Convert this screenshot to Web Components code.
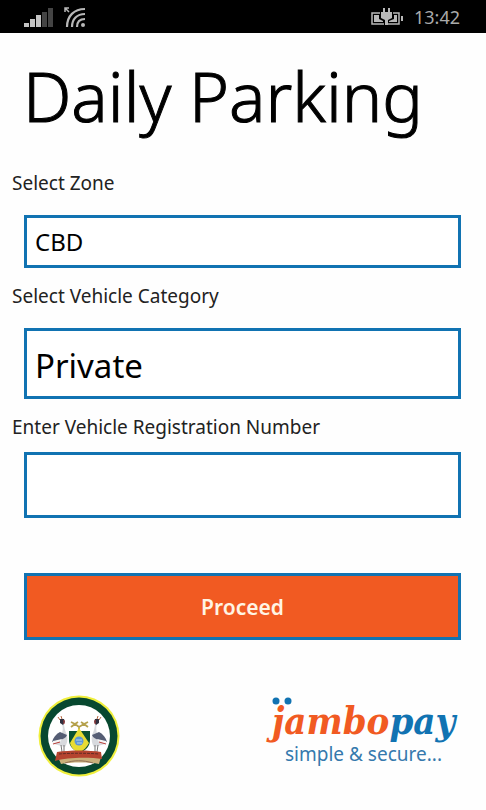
<!DOCTYPE html>
<html lang="en">
<head>
<meta charset="utf-8">
<meta name="viewport" content="width=device-width, initial-scale=1">
<title>Daily Parking</title>
<style>
    body {
        margin: 0;
        background: #fefefe;
        color: #000;
        font-family: "Noto Sans", "Open Sans", sans-serif;
        --blue: #1173b2;
        --orange: #f15a22;
    }
</style>
</head>
<body>
<parking-page>
    <status-bar slot="status" time="13:42"></status-bar>
    <form-field label="Select Zone" kind="select" value="CBD"></form-field>
    <form-field class="large" label="Select Vehicle Category" kind="select" value="Private"></form-field>
    <form-field class="entry" label="Enter Vehicle Registration Number" kind="text"></form-field>
    <action-button>Proceed</action-button>
    <county-crest slot="brand"></county-crest>
    <jambo-logo slot="brand"></jambo-logo>
</parking-page>

<script>
(function(){
    //small helper: every component clones its template in an open shadow root
    const define = (name, html, setup) => {
        const template = document.createElement('template');
        template.innerHTML = html;
        customElements.define(name, class extends HTMLElement {
            constructor()
            {
                super();
                this.attachShadow({mode:'open'});
                this.shadowRoot.appendChild(template.content.cloneNode(true));
            }

            connectedCallback(){
                if (setup) setup(this, this.shadowRoot);
            }
        });
    };

    //phone status bar: signal, wifi, battery and clock
    define('status-bar', `
    <style>
        :host {
            display: flex;
            align-items: center;
            justify-content: space-between;
            height: 33px;
            padding: 0 26px 0 24px;
            background: #000;
            color: #aaa;
            font-size: 18px;
            line-height: 32px;
        }
        div { display: flex; align-items: center; gap: 10px; }
        svg { display: block; }
        time { padding-top: 1px; }
    </style>
    <div>
        <svg width="30" height="22" viewBox="0 0 30 22" role="img" aria-label="Signal">
            <path fill="#c4c4c4" d="M0 17h5v4H0zM6 13h5v8H6zM12 9h5v12h-5z"/>
            <path fill="#444" d="M18 6h5v15h-5zM24 2h5v19h-5z"/>
        </svg>
        <svg width="22" height="22" viewBox="0 0 22 22" role="img" aria-label="Wi-Fi">
            <g fill="none" stroke="#b8b8b8" stroke-width="2.2">
                <path d="M3 21C3 10 10 3 21 3M8 21C8 13 13 8 21 8M13 21C13 16 16 13 21 13"/>
                <path stroke-width="1.5" d="M1 6V2h4M1 2l4 4"/>
            </g>
            <circle cx="19" cy="19" r="2" fill="#b8b8b8"/>
        </svg>
    </div>
    <div>
        <svg width="33" height="18" viewBox="0 0 33 18" role="img" aria-label="Battery charging">
            <path fill="none" stroke="#b8b8b8" stroke-width="1.5" d="M9 5H1v11h12M22 5h6v11H17"/>
            <path fill="#b8b8b8" d="M3 7h5v4l4 2v1H3zM23 7h3v7h-8v-1l5-2zM30 8h2v5h-2zM10 4h2V0h2v4h3V0h2v4h2v6l-4 2v5h-3v-5l-4-2z"/>
        </svg>
        <time></time>
    </div>`, (el, root) => {
        root.querySelector('time').textContent = el.getAttribute('time');
    });

    //label + control, the control is a drop-down or a text box
    define('form-field', `
    <style>
        :host {
            display: block;
            --height: 53px;
            --size: 24px;
            --gap: 18px;
        }
        :host(.large) { --height: 71px; --size: 33px; }
        :host(.entry) { --height: 66px; --gap: 11px; }
        label {
            display: block;
            margin-bottom: var(--gap);
            font-size: 19px;
            line-height: 28px;
            color: #222;
        }
        select, input {
            display: block;
            box-sizing: border-box;
            width: calc(100% - 12px);
            height: var(--height);
            margin: 0 0 0 12px;
            padding: 0 8px;
            border: 3px solid var(--blue);
            border-radius: 0;
            background: #fff;
            color: #000;
            font: var(--size) "Noto Sans", "Open Sans", sans-serif;
            appearance: none;
        }
        :host(.large) select { padding-top: 4px; }
    </style>
    <label for="control"></label>`, (el, root) => {
        root.querySelector('label').textContent = el.getAttribute('label');
        const isSelect = el.getAttribute('kind') === 'select';
        const control = document.createElement(isSelect ? 'select' : 'input');
        control.id = 'control';
        if (isSelect) control.add(new Option(el.getAttribute('value')));
        root.appendChild(control);
    });

    define('action-button', `
    <style>
        :host { display: block; margin: 41px 0 0 12px; }
        button {
            display: block;
            width: 100%;
            height: 67px;
            padding: 0;
            border: 3px solid var(--blue);
            background: var(--orange);
            color: #fff4e4;
            font: 600 21px "Noto Sans", "Open Sans", sans-serif;
        }
    </style>
    <button type="button"><slot></slot></button>`);

    //round crest with two cranes around a shield
    define('county-crest', `
    <style>
        :host { display: block; }
        svg { display: block; }
    </style>
    <svg width="82" height="82" viewBox="0 0 82 82" role="img" aria-label="County crest">
        <circle cx="41" cy="41" r="40.5" fill="#f0ef3c"/>
        <circle cx="41" cy="41" r="38.5" fill="#07482f"/>
        <circle cx="41" cy="41" r="31" fill="#fff"/>
        <path fill="none" stroke="#b5a14c" stroke-width="1.8" d="M33 27l4 2 3-2M33 32l4-3M50 27l-4 2-3-2M50 32l-4-3M37 29l4 3 5-3M41 31v4"/>
        <path fill="#0a5132" d="M31 36h21v9c0 6-4 10-10 13-7-3-11-7-11-13z"/>
        <path fill="#e8dc33" d="M41 33l10 15c-2 4-5 7-10 10-5-2-8-6-9-10z"/>
        <circle cx="41" cy="46" r="4.5" fill="#5c96d8"/>
        <path fill="none" stroke="#b6d8e2" d="M38 45h6M39 48h5"/>
        <g id="crane">
            <path fill="#d8dade" d="M24 29l2-1c0 4 1 8 3 12 1 5 0 9-2 12l-11-3c2-6 5-9 8-11 1-3 1-6 0-9z"/>
            <path fill="#555d74" d="M22 37c-4 2-7 6-8 10l8-2c3-1 6-2 7-5z"/>
            <path fill="#f5f5f5" d="M15 46l9-2-2 3-8 2z"/>
            <path fill="#30303f" d="M22 24h4l1 3-2 3-3-2z"/>
            <path fill="none" stroke="#b83f3a" d="M15 49l7-2M26 25v4"/>
            <path fill="none" stroke="#b5663f" d="M22 25l-2-3M24 24l-1-3"/>
            <path fill="none" stroke="#777" d="M23 50l1 7M26 50v7"/>
        </g>
        <use href="#crane" transform="translate(83 0) scale(-1 1)"/>
        <path fill="#c9b07a" d="M20 62c12-2 31-2 43 0l-2 7c-9-2-29-2-38 0z"/>
        <path fill="#b5442f" d="M19 57c13-2 32-2 44 0l1 7c-12-2-35-2-47 2z"/>
        <path fill="none" stroke="#642b25" stroke-dasharray="3 1" d="M21 59c12-1 28-1 40 0"/>
        <path fill="none" stroke="#8f6d54" d="M27 68c9-3 18-3 28 0"/>
    </svg>`);

    define('jambo-logo', `
    <style>
        :host { display: block; }
        svg { display: block; overflow: visible; }
        .name { font: italic 700 38px "DejaVu Serif Condensed", "DejaVu Serif", serif; }
        .tag { font: 19px "Noto Sans", "Open Sans", sans-serif; }
    </style>
    <svg width="196" height="72" viewBox="0 0 196 72">
        <circle cx="10" cy="6" r="3.5" fill="#1173b2"/>
        <circle cx="22" cy="6" r="3.5" fill="#1173b2"/>
        <text class="name" x="6" y="39" fill="#f15a22">jambo<tspan fill="#1173b2">pay</tspan></text>
        <text class="tag" x="19" y="66" fill="#3579ad">simple &amp; secure...</text>
    </svg>`);

    define('parking-page', `
    <style>
        :host { display: block; }
        main { padding: 23px 25px 0 12px; }
        h1 {
            margin: 0 0 33px 11px;
            font-size: 68px;
            font-weight: 300;
            line-height: 80px;
            white-space: nowrap;
            -webkit-text-stroke: 1px #000;
        }
        form { display: grid; gap: 14px; }
        footer {
            display: flex;
            justify-content: space-between;
            align-items: flex-start;
            padding: 55px 24px 32px 38px;
        }
    </style>
    <slot name="status"></slot>
    <main>
        <h1>Daily Parking</h1>
        <form><slot></slot></form>
    </main>
    <footer><slot name="brand"></slot></footer>`);
})();
</script>
</body>
</html>
